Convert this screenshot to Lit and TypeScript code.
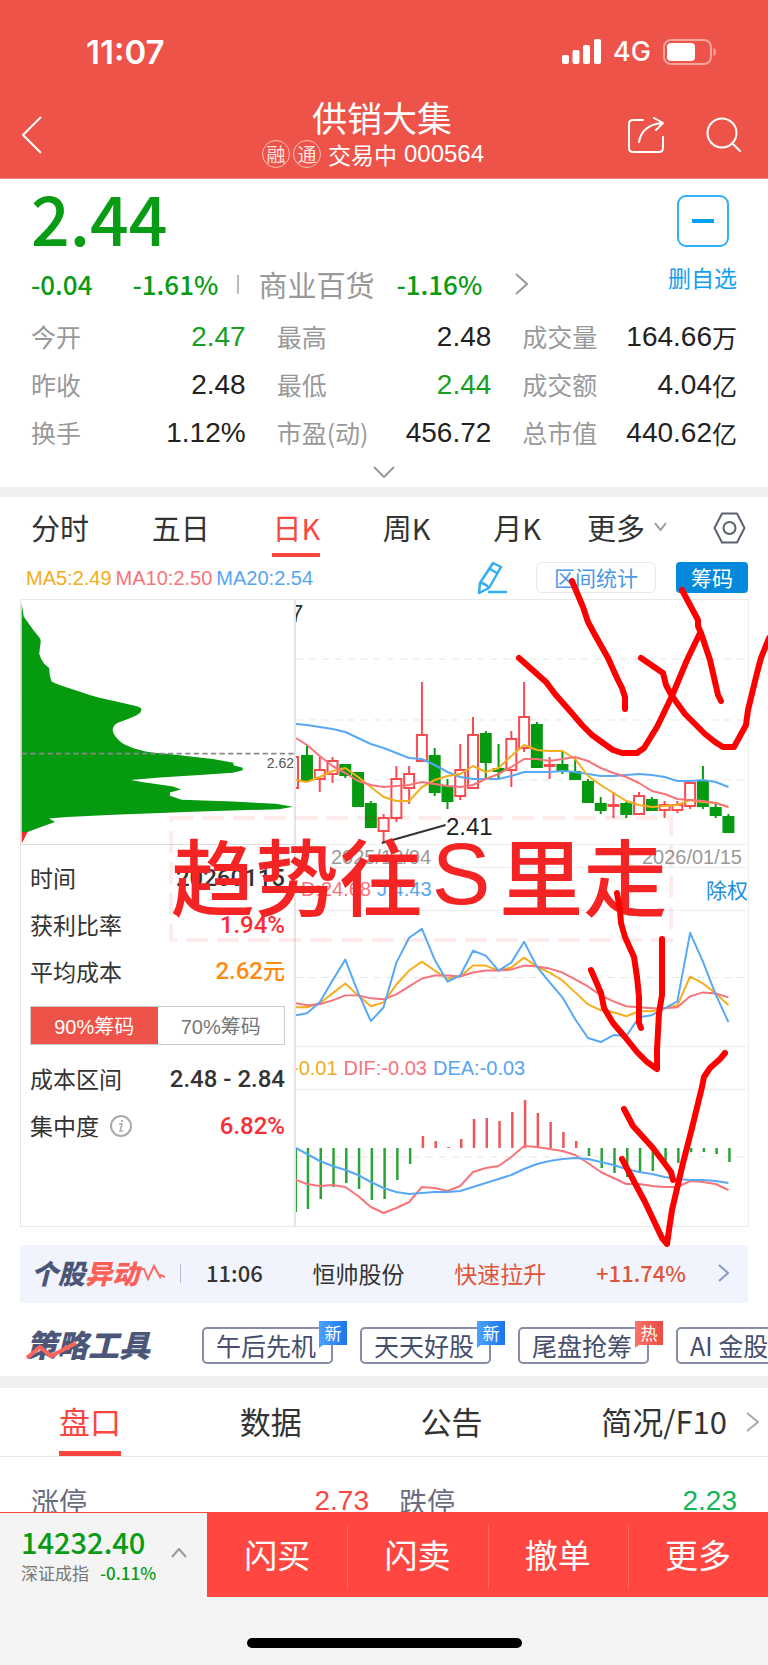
import { LitElement, html, svg, css } from "lit";
import { customElement, property, state } from "lit/decorators.js";
import { classMap } from "lit/directives/class-map.js";

const FIRST_X = 307;
const STEP = 12.8;
const barX = (i: number) => FIRST_X + i * STEP;

const line = (first: number, values: number[]) =>
  `296,${first} ` + values.map((v, i) => `${barX(i).toFixed(1)},${v}`).join(" ");

// kind, high, body top, body bottom, low
type Candle = [string, number, number, number, number];
const CANDLES: Candle[] = [
  ["g", 745, 756, 780, 780], ["r", 757, 770, 779, 792], ["r", 757, 761, 774, 783],
  ["g", 765, 765, 775, 778], ["g", 773, 773, 806, 806], ["g", 801, 804, 827, 827],
  ["r", 814, 818, 831, 842], ["r", 766, 779, 818, 822], ["r", 766, 774, 788, 804],
  ["r", 682, 735, 761, 761], ["g", 748, 756, 792, 796], ["g", 779, 787, 801, 809],
  ["r", 744, 770, 796, 800], ["r", 717, 735, 788, 788], ["g", 731, 734, 762, 778],
  ["g", 744, 769, 771, 779], ["r", 731, 739, 770, 787], ["r", 682, 717, 748, 752],
  ["g", 722, 725, 767, 767], ["r", 757, 765, 766, 779], ["g", 752, 765, 771, 774],
  ["g", 758, 772, 779, 779], ["g", 779, 782, 802, 802], ["g", 797, 804, 810, 814],
  ["r", 792, 805, 806, 818], ["g", 802, 804, 814, 818], ["r", 792, 796, 814, 814],
  ["g", 797, 800, 810, 810], ["r", 801, 805, 810, 818], ["r", 801, 805, 810, 813],
  ["r", 783, 783, 806, 809], ["g", 766, 782, 806, 809], ["g", 802, 808, 815, 818],
  ["g", 814, 817, 832, 832],
];

const MA5 = line(780, [782, 777, 771, 768, 777, 787, 797, 801, 801, 787, 780, 776, 774, 766, 772, 768, 756, 745, 750, 751, 751, 759, 776, 785, 793, 801, 805, 807, 806, 805, 800, 802, 803, 807]);
const MA10 = line(738, [745, 756, 766, 773, 781, 785, 787, 786, 785, 782, 784, 786, 787, 785, 779, 774, 767, 759, 759, 761, 759, 757, 761, 768, 773, 777, 783, 791, 794, 799, 800, 801, 803, 807]);
const MA20 = line(724, [725, 727, 729, 732, 738, 744, 748, 753, 758, 759, 765, 772, 777, 779, 779, 779, 776, 772, 772, 772, 771, 772, 774, 776, 776, 775, 774, 775, 777, 781, 781, 780, 782, 787]);
const KDJ_J = line(1016, [1014, 1003, 981, 960, 993, 1022, 1008, 963, 938, 929, 960, 982, 976, 951, 956, 971, 963, 942, 967, 983, 998, 1020, 1039, 1043, 1036, 1037, 1018, 1016, 1009, 1002, 933, 962, 995, 1023]);
const KDJ_K = line(1008, [1008, 1004, 994, 984, 996, 1007, 1003, 985, 971, 962, 971, 979, 977, 966, 966, 971, 968, 958, 967, 973, 981, 993, 1005, 1011, 1013, 1017, 1012, 1012, 1009, 1006, 977, 984, 994, 1006]);
const KDJ_D = line(1004, [1006, 1005, 1001, 996, 996, 999, 1000, 995, 987, 979, 976, 976, 977, 973, 971, 971, 970, 966, 967, 969, 973, 980, 987, 996, 1002, 1007, 1008, 1009, 1009, 1008, 997, 993, 994, 998]);
const DIF = line(1180, [1184, 1186, 1185, 1187, 1196, 1207, 1213, 1208, 1202, 1187, 1188, 1191, 1186, 1172, 1168, 1166, 1157, 1146, 1147, 1149, 1151, 1155, 1163, 1172, 1178, 1184, 1184, 1186, 1187, 1187, 1181, 1182, 1184, 1190]);
const DEA = line(1148, [1154, 1161, 1166, 1170, 1175, 1182, 1188, 1192, 1194, 1193, 1192, 1192, 1191, 1187, 1183, 1179, 1175, 1169, 1164, 1161, 1159, 1158, 1159, 1162, 1165, 1169, 1172, 1174, 1177, 1179, 1180, 1180, 1181, 1183]);
const MACD = [1209, 1199, 1187, 1183, 1189, 1200, 1199, 1180, 1164, 1136, 1141, 1147, 1139, 1119, 1118, 1121, 1112, 1100, 1113, 1122, 1132, 1141, 1156, 1168, 1173, 1177, 1172, 1171, 1165, 1163, 1152, 1152, 1154, 1162];

const STROKES = [
  "572,581 583,607 588,622 595,635 608,658 617,678 622,688 625,697 625,709",
  "519,658 546,682 555,694 570,711 582,725 592,735 603,743 613,750 622,753 637,753 644,748 657,727 672,696 687,660 700,633",
  "641,658 663,673 666,685 672,696 685,714 705,734 715,742 723,747 734,747 746,725 748,710 757,673 761,658 769,638",
  "682,590 698,620 698,626 701,633 710,660 718,695 721,701",
  "617,893 620,910 621,923 625,937 634,957 637,977 639,997 639,1023 641,1028",
  "591,970 601,993 604,1008 613,1023 625,1037 637,1052 647,1062 657,1069 657,1050 659,1013 662,995 662,939",
  "624,1109 633,1126 653,1148 671,1172 673,1180",
  "622,1159 645,1202 662,1238 667,1244 669,1230 672,1210 683,1163 692,1128 702,1087 704,1077 710,1068 720,1059 725,1053",
];

const QUOTES = [
  ["今开", "2.47", "", "down"], ["最高", "2.48", "", ""], ["成交量", "164.66", "万", ""],
  ["昨收", "2.48", "", ""], ["最低", "2.44", "", "down"], ["成交额", "4.04", "亿", ""],
  ["换手", "1.12%", "", ""], ["市盈(动)", "456.72", "", ""], ["总市值", "440.62", "亿", ""],
];

const chevron = (dir: string, w: number, h: number, cls = "") => {
  const d: Record<string, string> = {
    right: `M1 1 L${w - 1} ${h / 2} L1 ${h - 1}`,
    left: `M${w - 1} 1 L1 ${h / 2} L${w - 1} ${h - 1}`,
    down: `M1 1 L${w / 2} ${h - 1} L${w - 1} 1`,
    up: `M1 ${h - 1} L${w / 2} 1 L${w - 1} ${h - 1}`,
  };
  return html`<svg class="chev ${cls}" width=${w} height=${h} viewBox="0 0 ${w} ${h}" aria-hidden="true"><path d=${d[dir]} /></svg>`;
};

const shared = css`
  :host {
    display: block;
    font-family: "Noto Sans CJK SC", sans-serif;
    color: #333;
  }
  * { box-sizing: border-box; }
  button {
    font: inherit; color: inherit; background: none;
    border: 0; padding: 0; margin: 0; cursor: pointer;
  }
  a { color: inherit; text-decoration: none; }
  svg { display: block; flex: none; }
  .chev { fill: none; stroke: currentColor; stroke-width: 2; }
  .num { font-weight: 500; }
  .hv { font-family: "Liberation Sans", "Noto Sans CJK SC", sans-serif; }
  .down { color: #089b14; }
`;

@customElement("stock-header")
class StockHeader extends LitElement {
  static styles = [shared, css`
    header { background: #ed5349; color: #fff; border-bottom: 1px solid #f0887f; }
    .status {
      height: 98px; padding: 5px 51px 0 86px;
      display: flex; align-items: center; justify-content: space-between;
      font-family: Inter, sans-serif;
    }
    .clock { font-size: 33px; font-weight: 600; line-height: 40px; }
    .signals { display: flex; align-items: center; gap: 12px; font-size: 27px; font-weight: 500; }
    .nav {
      display: grid; grid-template-columns: 1fr auto 1fr; align-items: center;
      padding: 0 26px 10px 22px;
    }
    h1 { margin: 0; font-size: 35px; line-height: 38px; font-weight: 400; text-align: center; }
    .sub {
      display: flex; align-items: center; gap: 3px; margin: 4px 18px 0 0;
      font-size: 24px; line-height: 28px;
    }
    .mark {
      width: 28px; height: 28px; border: 1px solid #ffd0cc; border-radius: 50%;
      font-size: 19px; line-height: 25px; text-align: center; opacity: .85;
    }
    .state { padding-left: 4px; font-size: 23px; }
    .code { padding-left: 4px; }
    .nav button { padding-top: 4px; }
    .actions { display: flex; justify-content: flex-end; gap: 41px; }
    .actions svg { fill: none; stroke: #fff; stroke-width: 2; stroke-linecap: round; stroke-linejoin: round; }
  `];
  render() {
    return html`<header>
      <div class="status">
        <span class="clock">11:07</span>
        <div class="signals">
          <svg width="39" height="25" viewBox="0 0 39 25" fill="#fff">
            <rect x="0" y="16" width="7" height="9" rx="2" /><rect x="10.500" y="11" width="7" height="14" rx="2" />
            <rect x="21" y="6" width="7" height="19" rx="2" /><rect x="32" y="0" width="7" height="25" rx="2" />
          </svg>
          <span>4G</span>
          <svg width="54" height="26" viewBox="0 0 54 26">
            <rect x="1" y="1" width="47" height="24" rx="7" fill="none" stroke="#f8a49e" stroke-width="2" />
            <rect x="4" y="4" width="28" height="18" rx="4" fill="#fff" />
            <path d="M50.500 9 Q53 10 53 13 Q53 16 50.500 17 Z" fill="#f8a49e" />
          </svg>
        </div>
      </div>
      <div class="nav">
        <button aria-label="返回">${chevron("left", 20, 38)}</button>
        <div>
          <h1>供销大集</h1>
          <div class="sub">
            <span class="mark">融</span><span class="mark">通</span>
            <span class="state">交易中</span><span class="code hv">000564</span>
          </div>
        </div>
        <div class="actions">
          <button aria-label="分享"><svg width="37" height="36" viewBox="0 0 37 36">
            <path d="M15 3 H5 Q1 3 1 7 V31 Q1 35 5 35 H31 Q35 35 35 31 V20" />
            <path d="M11 25 Q14 8 34 6 M26 1 L35 6 L28 13" />
          </svg></button>
          <button aria-label="搜索"><svg width="36" height="36" viewBox="0 0 36 36">
            <circle cx="16" cy="16" r="14.500" /><path d="M26 26 L34 34" />
          </svg></button>
        </div>
      </div>
    </header>`;
  }
}

@customElement("stock-quote")
class StockQuote extends LitElement {
  static styles = [shared, css`
    section { background: #fff; padding: 4px 31px 9px; }
    .top { display: flex; justify-content: space-between; align-items: flex-start; }
    .price { font-size: 68px; line-height: 68px; }
    .moves {
      display: flex; align-items: center; margin-top: 16px;
      font-size: 26px; line-height: 34px;
    }
    .pct { margin-left: 40px; }
    .bar { width: 2px; height: 19px; background: #bbb; margin: 0 19px; }
    .sector { display: flex; align-items: center; }
    .sector .name { font-size: 29px; color: #999; }
    .sector .num { margin: 0 33px 0 22px; }
    .sector .chev { color: #999; }
    .remove {
      display: flex; flex-direction: column; align-items: center; gap: 13px;
      padding-top: 12px; color: #129ff0; font-size: 23px; line-height: 34px;
    }
    .box {
      width: 52px; height: 52px; border: 2px solid #2fb1f7; border-radius: 9px;
      display: grid; place-items: center;
    }
    .box::after { content: ""; width: 22px; height: 4px; background: #0aa0f5; }
    dl {
      margin: 12px 0 0; display: grid; grid-template-columns: repeat(3, 1fr);
      column-gap: 31px; grid-auto-rows: 48px;
    }
    dl div { display: flex; justify-content: space-between; align-items: center; white-space: nowrap; line-height: 48px; }
    dt { color: #999; font-size: 25px; padding-bottom: 2px; }
    dd { margin: 0; font-size: 28px; color: #222; display: flex; align-items: center; }
    dd.down { color: #14a020; }
    .unit { font-family: "Noto Sans CJK SC", sans-serif; font-size: 25px; }
    .more { display: block; margin: 9px auto 0; color: #999; }
  `];
  render() {
    return html`<section>
      <div class="top">
        <div>
          <div class="price num down">2.44</div>
          <div class="moves">
            <span class="num down">-0.04</span><span class="num down pct">-1.61%</span>
            <span class="bar"></span>
            <a class="sector" href="#sector"><span class="name">商业百货</span><span class="num down">-1.16%</span>${chevron("right", 13, 22)}</a>
          </div>
        </div>
        <button class="remove"><span class="box"></span>删自选</button>
      </div>
      <dl>${QUOTES.map(([k, v, u, c]) => html`<div><dt>${k}</dt><dd class="hv ${c}">${v}${u ? html`<span class="unit">${u}</span>` : ""}</dd></div>`)}</dl>
      <button class="more" aria-label="展开">${chevron("down", 22, 12)}</button>
    </section>`;
  }
}

@customElement("chip-panel")
class ChipPanel extends LitElement {
  @state() range = "90";
  static styles = [shared, css`
    :host { border-right: 2px solid #e6e6e6; border-left: 1px solid #e6e6e6; }
    .profile { position: relative; height: 245px; border-bottom: 1px solid #ddd; }
    .profile svg { width: 100%; height: 100%; }
    .avg { position: absolute; right: 0; top: 155px; font-size: 14px; line-height: 16px; color: #555; }
    .stats { padding: 10px 9px 0 9px; }
    .row {
      height: 47px; display: flex; align-items: center; justify-content: space-between;
      font-size: 23px; line-height: 43px; padding-bottom: 2px; white-space: nowrap;
    }
    .row b { font-family: Roboto, "Noto Sans CJK SC", sans-serif; font-weight: 500; font-size: 24px; line-height: 46px; }
    .row b small { font-size: 22px; }
    .red { color: #fa2d35; }
    .orange { color: #ff8a12; }
    .toggle { display: flex; height: 39px; margin: 10px 0 11px; border: 1px solid #ccc; }
    .toggle button { flex: 1; font-size: 20px; color: #777; }
    .toggle .on { background: #ed5349; color: #fff; }
    .label { display: flex; align-items: center; gap: 11px; }
  `];
  render() {
    const tab = (id: string) => html`<button class=${classMap({ hv: true, on: this.range === id })} @click=${() => (this.range = id)}>${id}%筹码</button>`;
    return html`
      <div class="profile">
        <svg viewBox="60 28 825 735" preserveAspectRatio="none">
          <path fill="#059a10" d="M62 38 L68 78 L95 115 L116 142 Q121 148 119 158 L115 190 Q119 205 130 220 L145 233 L147 255 L152 273 Q170 284 220 298 L270 315 Q300 324 345 333 L400 346 Q424 351 424 358 Q424 368 408 376 L385 386 L355 397 Q338 404 337 420 Q340 440 370 462 Q400 478 430 483 Q460 489 500 491 L560 498 L640 507 L702 518 L702 526 L730 533 L730 541 L700 548 L600 555 L480 563 L392 570 L430 577 L520 590 L543 599 L510 608 L510 618 L545 630 L700 635 L830 642 L882 651 L840 658 L600 665 L340 675 L200 682 L145 686 L163 697 L120 712 L80 727 L62 727 Z" />
          <path fill="#f22a2a" d="M62 727 H80 L62 762 Z" />
          <path d="M62 491 H884" stroke="#8a8a8a" stroke-width="5" stroke-dasharray="16 10" />
        </svg>
        <span class="avg hv">2.62</span>
      </div>
      <div class="stats">
        <div class="row"><span>时间</span><b>20260115</b></div>
        <div class="row"><span>获利比率</span><b class="red">1.94%</b></div>
        <div class="row"><span>平均成本</span><b class="orange">2.62<small>元</small></b></div>
        <div class="toggle">${tab("90")}${tab("70")}</div>
        <div class="row"><span>成本区间</span><b>2.48 - 2.84</b></div>
        <div class="row"><span class="label">集中度
          <svg width="22" height="22" viewBox="0 0 22 22" fill="none" stroke="#aaa" stroke-width="2">
            <circle cx="11" cy="11" r="10" /><path d="M9 9 H12 L10 16 H13" stroke-width="1.500" /><path d="M12 5 V7" />
          </svg></span><b class="red">6.82%</b></div>
      </div>`;
  }
}

@customElement("kline-charts")
class KlineCharts extends LitElement {
  static styles = [shared, css`
    :host { min-width: 0; border-right: 1px solid #eee; }
    .plot { position: relative; overflow: hidden; border-bottom: 1px solid #eee; }
    .plot svg { width: 100%; height: 100%; }
    .price { height: 245px; }
    .kdj { height: 136px; }
    .macd { height: 136px; border-bottom: 0; }
    .dates {
      height: 23px; padding: 2px 6px 0 35px; display: flex; justify-content: space-between; align-items: center;
      font-size: 20px; color: #999; border-bottom: 1px solid #eee;
    }
    .legend {
      height: 43px; display: flex; align-items: center; gap: 6px; overflow: hidden;
      font-size: 20px; white-space: nowrap; border-bottom: 1px solid #eee;
    }
    .first { padding-left: 5px; }
    .cut { margin-left: -4px; }
    .o { color: #f2ac1c; } .p { color: #f7747a; } .b { color: #57a5f0; }
    .legend button { margin-left: auto; font-size: 21px; color: #1a8fdc; font-family: "Noto Sans CJK SC", sans-serif; }
    .grid { stroke: #e6e6e6; stroke-width: 1; stroke-dasharray: 7 6; }
    .l { fill: none; stroke-width: 2; stroke-linejoin: round; }
    .lo { stroke: #f5ae1e; } .lp { stroke: #f7747a; } .lb { stroke: #57a9f5; }
    .g { fill: #059a10; stroke: #059a10; } .r { fill: #fff; stroke: #fa4a50; }
    .hi { position: absolute; left: -6px; top: 0; font-size: 24px; line-height: 28px; }
    .lo-tag { position: absolute; left: 150px; top: 213px; font-size: 24px; line-height: 28px; color: #222; }
  `];
  render() {
    return html`
      <div class="plot price">
        <svg viewBox="296 600 453 244" preserveAspectRatio="none">
          ${[659, 720, 780].map((y) => svg`<path class="grid" d="M296 ${y} H749" />`)}
          <rect class="r" x="288" y="757" width="10" height="31" stroke-width="2" />
          ${CANDLES.map(([k, hi, top, bot, lo], i) => svg`<g class=${k}>
            <path d="M${barX(i)} ${hi} V${lo}" stroke-width="2" />
            <rect x=${barX(i) - 5} y=${top} width="10" height=${Math.max(1, bot - top)} stroke-width="2" /></g>`)}
          <polyline class="l lb" points=${MA20} /><polyline class="l lo" points=${MA5} /><polyline class="l lp" points=${MA10} />
          <path d="M382 843 L446 825" stroke="#333" stroke-width="2" />
        </svg>
        <span class="hi hv">7</span><span class="lo-tag hv">2.41</span>
      </div>
      <div class="dates hv"><span>2025/12/04</span><span>2026/01/15</span></div>
      <div class="legend first hv"><span class="p">D:24.68</span><span class="b">J:4.43</span><button>除权</button></div>
      <div class="plot kdj">
        <svg viewBox="296 911 453 136" preserveAspectRatio="none">
          <path class="grid" d="M296 978 H749" />
          <polyline class="l lo" points=${KDJ_K} /><polyline class="l lp" points=${KDJ_D} /><polyline class="l lb" points=${KDJ_J} />
        </svg>
      </div>
      <div class="legend hv"><span class="o cut">-0.01</span><span class="p">DIF:-0.03</span><span class="b">DEA:-0.03</span></div>
      <div class="plot macd">
        <svg viewBox="296 1090 453 136" preserveAspectRatio="none">
          <path class="grid" d="M296 1157 H749" />
          <path d="M296 1148 V1212" stroke="#2ba336" stroke-width="2" />
          ${MACD.map((y, i) => svg`<path d="M${barX(i) + 1} 1148 V${y}" stroke=${y > 1148 ? "#2ba336" : "#ee565a"} stroke-width="2.500" />`)}
          <polyline class="l lp" points=${DIF} /><polyline class="l lb" points=${DEA} />
        </svg>
      </div>`;
  }
}

@customElement("chart-section")
class ChartSection extends LitElement {
  @state() tab = "日K";
  static styles = [shared, css`
    section { position: relative; background: #fff; border-top: 10px solid #f0f0f0; }
    .tabs { display: flex; align-items: center; gap: 46px; padding: 0 22px 0 31px; height: 61px; }
    .periods { flex: 1; display: flex; justify-content: space-between; }
    .tab, .menu { height: 59px; font-size: 29px; border: solid transparent; border-width: 4px 0; padding-bottom: 2px; white-space: nowrap; }
    .on { color: #fb4640; border-bottom-color: #fb4640; }
    .menu { display: flex; align-items: center; gap: 9px; }
    .menu .chev { color: #999; }
    .tools { display: flex; align-items: center; height: 41px; padding: 0 20px 3px 26px; }
    .ma { display: flex; gap: 4px; font-size: 20px; flex: 1; white-space: nowrap; padding-top: 2px; }
    .o { color: #f2ac1c; } .p { color: #f7747a; } .b { color: #57a5f0; }
    .stat, .chips { height: 31px; font-size: 21px; line-height: 28px; border-radius: 6px; white-space: nowrap; }
    .stat { width: 120px; margin: 0 20px 0 29px; color: #4b97e8; border: 1px solid #e6e6e6; }
    .chips { width: 72px; background: #0589dc; color: #fff; border-radius: 4px; }
    .frame {
      display: grid; grid-template-columns: 276px 1fr; margin: 0 19px 0 20px;
      border: solid #e9e9e9; border-width: 1px 0;
    }
    .stamp {
      position: absolute; left: 169px; top: 319px; width: 504px; height: 126px;
      display: flex; justify-content: center; padding: 18px 4px 0 0;
      font: 500 84px/80px "Noto Sans CJK SC", sans-serif; color: #f52424; white-space: nowrap;
    }
    .stamp i { font: 400 88px/80px "Liberation Sans", sans-serif; margin: 0 9px; }
    .stamp svg { position: absolute; left: 0; top: 0; fill: none; stroke: #f00000; stroke-opacity: .08; stroke-width: 4; stroke-dasharray: 22 9; }
    .ink { position: absolute; left: 0; top: 0; width: 100%; height: 750px; pointer-events: none; }
    .ink polyline { fill: none; stroke: #fd0000; stroke-width: 6; stroke-linecap: round; stroke-linejoin: round; }
  `];
  render() {
    return html`<section>
      <div class="tabs">
        <div class="periods">${["分时", "五日", "日K", "周K", "月K"].map((t) => html`<button class=${classMap({ tab: true, on: this.tab === t })} @click=${() => (this.tab = t)}>${t}</button>`)}</div>
        <button class="menu">更多${chevron("down", 13, 9)}</button>
        <button aria-label="设置"><svg width="33" height="32" viewBox="0 0 33 32" fill="none" stroke="#5c6170" stroke-width="2" stroke-linejoin="round">
          <path d="M9 1.500 H24 L31.500 16 L24 30.500 H9 L1.500 16 Z" /><circle cx="16.500" cy="16" r="6" />
        </svg></button>
      </div>
      <div class="tools">
        <div class="ma hv"><span class="o">MA5:2.49</span><span class="p">MA10:2.50</span><span class="b">MA20:2.54</span></div>
        <button aria-label="画线"><svg width="30" height="33" viewBox="0 0 30 33" fill="none" stroke="#32aef5" stroke-width="2.500" stroke-linejoin="round">
          <path d="M16 2 L24 6 L12 27 L2 32 L3 22 Z M3 22 Q8 22 12 27 M13 8 L20 12" /><path d="M11 31 H30" />
        </svg></button>
        <button class="stat">区间统计</button>
        <button class="chips">筹码</button>
      </div>
      <div class="frame"><chip-panel></chip-panel><kline-charts></kline-charts></div>
      <div class="stamp"><svg width="504" height="126" viewBox="0 0 504 126"><rect x="2" y="2" width="500" height="122" /></svg>趋势往<i>S</i>里走</div>
      <svg class="ink" viewBox="0 497 768 750" preserveAspectRatio="none">${STROKES.map((p) => svg`<polyline points=${p} />`)}</svg>
    </section>`;
  }
}

@customElement("tool-button")
class ToolButton extends LitElement {
  @property() name = "";
  @property() tag = "";
  static styles = [shared, css`
    :host { position: relative; flex: none; }
    button {
      width: 131px; height: 37px; border: 2px solid #868da6; border-radius: 5px;
      font-size: 25px; line-height: 33px; color: #454e6d; white-space: nowrap;
      padding-left: 12px; text-align: left;
    }
    .tag {
      position: absolute; right: -14px; top: -6px; width: 28px; height: 27px;
      font-size: 17px; line-height: 23px; text-align: center; color: #fff;
      background: linear-gradient(90deg, #4ba3fb, #1a75ee);
      clip-path: polygon(0 0, 100% 0, 100% 89%, 14% 89%, 0 100%);
    }
    .hot { background: linear-gradient(90deg, #fa7468, #ea4c42); }
  `];
  render() {
    return html`<button>${this.name}</button><span class=${classMap({ tag: true, hot: this.tag === "热" })}>${this.tag}</span>`;
  }
}

@customElement("stock-feed")
class StockFeed extends LitElement {
  static styles = [shared, css`
    section { background: #fff; border-bottom: 12px solid #efefef; padding-top: 18px; }
    .news {
      display: flex; align-items: center; height: 58px;
      margin: 0 20px; padding: 0 19px 2px 11px; background: #f1f4fc; border-radius: 4px;
      font-size: 23px; white-space: nowrap;
    }
    .logo { display: flex; align-items: center; font: italic 900 27px/36px "Noto Sans CJK SC", sans-serif; color: #4c5778; }
    .logo em { color: #fb5f56; }
    .sep { width: 1px; height: 19px; background: #b5bcd6; margin: 0 25px 0 15px; }
    .items { flex: 1; display: flex; justify-content: space-between; margin-right: 32px; }
    .items .num { font-size: 22px; }
    .hot { color: #e0553a; }
    .news .chev { color: #8b97c4; }
    .tools { display: flex; gap: 27px; padding: 24px 0 12px 26px; overflow: hidden; }
    h2 {
      position: relative; flex: none; margin: 0 25px 0 0;
      font: italic 900 31px/33px "Noto Sans CJK SC", sans-serif; color: #4c5778;
    }
    h2 svg { position: absolute; left: 0; top: 13px; }
  `];
  render() {
    return html`<section>
      <a class="news" href="#news">
        <span class="logo">个股<em>异动</em><svg width="26" height="18" viewBox="0 0 26 18" fill="none" stroke="#fb6a61" stroke-width="2"><path d="M0 5 L5 5 L9 15 L15 2 L21 13 L22 11 L26 13" /></svg></span>
        <span class="sep"></span>
        <span class="items"><span class="num">11:06</span><span>恒帅股份</span><span class="hot">快速拉升</span><span class="num hot">+11.74%</span></span>
        ${chevron("right", 11, 18)}
      </a>
      <div class="tools">
        <h2>策略工具<svg width="52" height="20" viewBox="0 0 52 20" fill="none" stroke="#fb655c" stroke-width="4"><path d="M1 18 L14 7 L25 16 L50 3" /></svg></h2>
        <tool-button name="午后先机" tag="新"></tool-button>
        <tool-button name="天天好股" tag="新"></tool-button>
        <tool-button name="尾盘抢筹" tag="热"></tool-button>
        <tool-button name="AI 金股池" tag="热"></tool-button>
      </div>
    </section>`;
  }
}

@customElement("stock-detail")
class StockDetail extends LitElement {
  @state() tab = "盘口";
  static styles = [shared, css`
    section { background: #fff; }
    .tabs { display: flex; justify-content: space-between; height: 69px; padding: 0 9px 0 59px; border-bottom: 1px solid #e5e5e5; }
    .tab { font-size: 31px; border: solid transparent; border-width: 5px 0; white-space: nowrap; height: 68px; padding-bottom: 4px; }
    .on { color: #fb4640; border-bottom-color: #fb4640; }
    .last { display: flex; align-items: center; gap: 19px; }
    .last .chev { color: #aaa; }
    dl { margin: 0; display: grid; grid-template-columns: 1fr 1fr; column-gap: 30px; padding: 24px 31px 0; height: 55px; overflow: hidden; }
    dl div { display: flex; justify-content: space-between; font-size: 28px; line-height: 40px; }
    dt { color: #686d80; }
    dd { margin: 0; }
    .up { color: #fb4640; }
    .dn { color: #14b458; }
  `];
  render() {
    const tab = (t: string) => html`<button class=${classMap({ tab: true, on: this.tab === t })} @click=${() => (this.tab = t)}>${t}</button>`;
    return html`<section>
      <div class="tabs">${tab("盘口")}${tab("数据")}${tab("公告")}<div class="last">${tab("简况/F10")}${chevron("right", 13, 20)}</div></div>
      <dl><div><dt>涨停</dt><dd class="hv up">2.73</dd></div><div><dt>跌停</dt><dd class="hv dn">2.23</dd></div></dl>
    </section>`;
  }
}

@customElement("trade-bar")
class TradeBar extends LitElement {
  static styles = [shared, css`
    footer { background: #f4f4f4; }
    .bar { display: grid; grid-template-columns: 207px repeat(4, 1fr); height: 85px; border-top: 1px solid #fb4640; }
    .index { display: flex; align-items: center; justify-content: space-between; padding: 0 20px 0 21px; text-align: left; white-space: nowrap; }
    .value { display: block; font-size: 29px; line-height: 36px; }
    .name { display: flex; gap: 11px; font-size: 17px; line-height: 28px; color: #777; }
    .index .chev { color: #999; margin-bottom: 4px; }
    .act { position: relative; background: #ff4640; color: #fff; font-size: 33px; padding-bottom: 2px; }
    .act + .act::before { content: ""; position: absolute; left: 0; top: 12px; bottom: 9px; width: 1px; background: #ff6a63; }
    .home { width: 275px; height: 10px; border-radius: 5px; background: #000; margin: 0 auto; }
    .safe { padding: 41px 0 17px; }
  `];
  render() {
    return html`<footer>
      <div class="bar">
        <button class="index"><span><span class="value num down">14232.40</span><span class="name">深证成指<span class="num down">-0.11%</span></span></span>${chevron("up", 16, 10)}</button>
        ${["闪买", "闪卖", "撤单", "更多"].map((t) => html`<button class="act">${t}</button>`)}
      </div>
      <div class="safe"><div class="home"></div></div>
    </footer>`;
  }
}

@customElement("app-root")
class AppRoot extends LitElement {
  static styles = css`:host { display: block; background: #fff; overflow: hidden; }`;
  render() {
    return html`<stock-header></stock-header><stock-quote></stock-quote><chart-section></chart-section>
      <stock-feed></stock-feed><stock-detail></stock-detail><trade-bar></trade-bar>`;
  }
}
